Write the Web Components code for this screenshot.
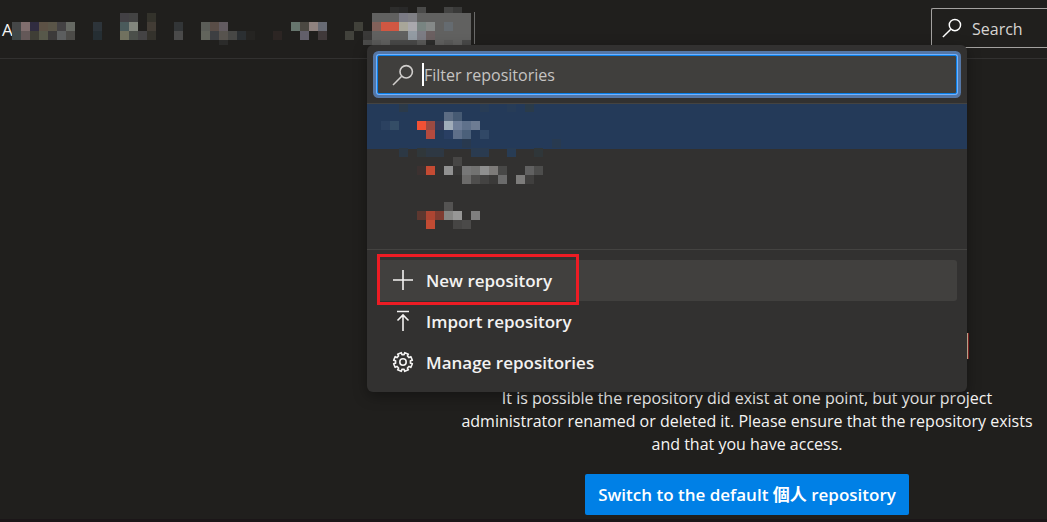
<!DOCTYPE html>
<html lang="en">
<head>
<meta charset="utf-8">
<title>Repositories</title>
<style>
html { background: #201f1d; }
body { margin: 0; color: #f5f4f3; font: 17px/23px "Open Sans", "Noto Sans CJK TC", sans-serif; }
</style>
</head>
<body>
<repo-page></repo-page>

<template id="page-tpl">
<style>
:host { display: block; position: relative; min-height: 100vh; box-sizing: border-box; border-bottom: 3px solid #1b1618; }
</style>
<page-header></page-header>
<missing-repo>
  It is possible the repository did exist at one point, but your project administrator renamed or deleted it. Please ensure that the repository exists and that you have access.
  <span slot="action">Switch to the default 個人 repository</span>
</missing-repo>
<repo-menu></repo-menu>
</template>

<template id="header-tpl">
<style>
:host { display: flex; align-items: flex-start; justify-content: space-between; height: 58px; border-bottom: 1px solid #323130; overflow: hidden; }
nav { display: flex; height: 38px; margin-top: 7px; overflow: hidden; }
nav a { width: 12px; padding: 11px 0 0 2px; box-sizing: border-box; color: inherit; text-decoration: none; }
.edge { width: 1px; height: 32px; margin: 5px 0 0 3px; background: #6a6a69; }
label { display: flex; align-items: center; gap: 10px; width: 116px; height: 40px; margin-top: 8px; padding-left: 10px; box-sizing: border-box; border: 1px solid #a3a19f; border-right: 0; border-radius: 2px 0 0 2px; }
input { flex: 1; min-width: 0; padding: 2px 0 0; border: 0; outline: 0; background: none; font: inherit; font-size: 16px; color: inherit; }
input::placeholder { color: #d6d4d2; opacity: 1; }
ui-icon { --size: 20px; color: #fff; }
</style>
<nav aria-label="Breadcrumb"><a href="#">A</a><pixel-mosaic cols="51" rows="5" trim="3" data-cells="
0: 42 2d2d2c 43 292929 45 4a4a49 48 434342 49 393938
1: 12 424044 13 434343 15 33322b 40 616160 41 616160 42 616160 43 7b7b85 44 7f7f84 45 616160 46 616160 47 616160 48 616160 49 616160 50 616160
2: 0 454748 1 806e6e 2 302c40 3 5c5145 4 5a5548 5 444244 6 666963 9 2d343a 12 4a5a5b 13 82867d 15 423c35 18 323537 21 5b5d58 22 594d47 23 625b60 31 67766e 32 4b4842 33 8f827f 34 676a73 38 41413a 40 82615a 41 d15742 42 d15742 43 a8a699 44 a9a8ad 45 788481 46 858988 47 616160 48 656b70 49 616160 50 616160
3: 0 404848 1 645858 2 3f3e36 3 57584a 4 3c3a3a 5 5c5e5f 6 4c4b48 9 252e33 12 71715f 13 4b4f4a 14 444344 15 34322c 18 4a4a4a 21 62645c 22 3d3f42 23 57534e 24 474745 25 2b2f32 26 252422 29 2c2523 32 625f6a 34 40393a 37 42423c 39 3a3938 40 616160 41 616160 42 616160 43 616160 44 939ba3 45 7c7c84 46 6b6061 47 616160 48 616160 49 616160 50 616160
4: 23 2b2b2a 39 4c4c4b 40 5a5a59 41 616160 42 4a4a49 43 4a4a49 44 4a4a49 45 5a5a59 46 2d2d2c 47 616160 48 5a5a59 49 616160 50 4a4a49"></pixel-mosaic><span class="edge"></span></nav>
<label><ui-icon name="search"></ui-icon><input type="text" placeholder="Search" aria-label="Search"></label>
</template>

<template id="missing-tpl">
<style>
:host { display: block; width: 600px; margin-left: auto; padding-top: 274px; text-align: center; }
.title { width: 520px; height: 26px; border-right: 1px solid #d9c2a4; box-shadow: 1px 0 #8e2525; }
p { margin: 28px 7px 18px; font-size: 16px; }
button { height: 41px; padding: 0 13px; border: 0; border-radius: 2px; background: #0080e6; color: #fff; font: inherit; font-weight: 600; }
</style>
<div class="title"></div>
<p><slot></slot></p>
<button type="button"><slot name="action"></slot></button>
</template>

<template id="menu-tpl">
<style>
:host { display: block; position: absolute; top: 45px; right: 80px; width: 600px; background: #323130; border-radius: 6px; box-shadow: 0 4px 14px rgba(0,0,0,.35); }
.filter { display: flex; align-items: center; height: 39px; margin: 10px 10px 9px; padding-left: 14px; box-sizing: border-box; border: 1px solid #0a80e8; border-radius: 2px; background: #403f3d; box-shadow: 0 0 0 1px #72b2ff, 0 0 0 4px #5577a6; }
.filter ui-icon { color: #d0cecc; }
.caret { width: 2px; height: 23px; margin-left: 8px; background: #fff; }
input { flex: 1; min-width: 0; padding: 2px 0 0; border: 0; outline: 0; background: none; font: inherit; font-size: 16px; color: inherit; }
input::placeholder { color: #c6c4c2; opacity: 1; }
.list { position: relative; border: solid #444341; border-width: 1px 0; padding-bottom: 10px; }
ul { margin: 0; padding: 0; list-style: none; }
li { height: 45px; }
li.selected { background: #243a59; }
.list pixel-mosaic { position: absolute; top: 0; left: 14px; }
.actions { padding: 10px 10px 9px; }
</style>
<label class="filter"><ui-icon name="search"></ui-icon><span class="caret"></span><input type="text" placeholder="Filter repositories" aria-label="Filter repositories"></label>
<div class="list">
  <ul><li class="selected"></li><li></li><li></li></ul>
  <pixel-mosaic cols="20" rows="14" trim="1" data-cells="
0: 2 2b3a4a 11 283c55 14 273c57 16 2a3b4a
1: 7 5c6c83 8 465a73
2: 0 2b4160 1 344d66 4 f15135 5 9c4a42 6 363b59 7 a0acb9 8 6f7f99 9 5f718b 10 6d7c93
3: 5 b44a3e 7 293f63 8 5e6f89 9 4b607a 11 314866
4: 9 28394f 19 283a50
5: 2 2c3844 4 30373a 5 2e3843 6 2e3843 10 2a3b50 11 2a3b50 14 283c54 17 2f3639
6: 8 474645
7: 4 3c3130 5 c54b33 7 919191 8 373635 9 777777 10 727271 11 8f8f8f 12 7d7b79 13 484847 16 616161 17 4d4d4c
8: 9 6c6b6a 10 4f4e4d 11 444342 12 3b3a39 13 6b6b6b 15 7d7c7b 16 403f3e
11: 7 545352
12: 4 5d372f 5 ad4532 6 7f3c31 7 868684 8 979796 10 7f7f7f
13: 5 c14b33 8 464544 9 4b4a49"></pixel-mosaic>
</div>
<div class="actions">
  <menu-action icon="plus" active>New repository</menu-action>
  <menu-action icon="import">Import repository</menu-action>
  <menu-action icon="gear">Manage repositories</menu-action>
</div>
</template>

<template id="action-tpl">
<style>
:host { display: block; position: relative; }
button { display: flex; align-items: center; gap: 12px; width: 100%; height: 41px; padding: 0 15px; border: 0; border-radius: 3px; background: none; color: #f3f2f1; font: inherit; font-weight: 600; text-align: left; }
ui-icon { margin-bottom: 2px; }
:host([active]) button { background: #41403e; }
:host([active])::after { content: ""; position: absolute; top: -6px; left: 0; width: 202px; height: 51px; box-sizing: border-box; border: 3px solid #ed1c24; }
</style>
<button type="button"><ui-icon></ui-icon><span><slot></slot></span></button>
</template>

<script>
const markup = id => document.getElementById(id).content.cloneNode(true);

class TemplateElement extends HTMLElement {
  constructor() {
    super();
    this.attachShadow({ mode: "open" }).append(markup(this.constructor.template));
  }
}

const ICONS = {
  search: '<circle cx="14.2" cy="7.8" r="6.2"/><path d="M9.700 12.300 1 21"/>',
  plus: '<path d="M11 1v20M1 11h20"/>',
  import: '<path d="M5 1.500h12M11 21V5M5.500 10.500 11 5l5.500 5.500"/>',
  gear: ''
};

/* Gear outline: eight broad teeth separated by narrow notches. */
(() => {
  const pt = (r, a) => (11 + r * Math.cos(a)).toFixed(2) + " " + (11 + r * Math.sin(a)).toFixed(2);
  let d = "";
  for (let i = 0; i < 8; i++) {
    const a = i * Math.PI / 4 + Math.PI / 8;
    d += (i ? "L" : "M") + pt(7.5, a - .24) + "L" + pt(9.5, a - .21) + "L" + pt(9.5, a + .21) + "L" + pt(7.5, a + .24);
  }
  ICONS.gear = '<path stroke-linejoin="round" d="' + d + 'Z"/><circle cx="11" cy="11" r="3.2"/>';
})();

class UiIcon extends HTMLElement {
  static observedAttributes = ["name"];
  connectedCallback() { this.draw(); }
  attributeChangedCallback() { this.draw(); }
  draw() {
    const root = this.shadowRoot || this.attachShadow({ mode: "open" });
    root.innerHTML = '<style>:host{display:block;flex:none;width:var(--size,22px);height:var(--size,22px)}svg{display:block;width:100%;height:100%}</style>' +
      '<svg viewBox="0 0 22 22" fill="none" stroke="currentColor" stroke-width="1.6" aria-hidden="true">' +
      (ICONS[this.getAttribute("name")] || "") + '</svg>';
  }
}

/* Redacted text: 9px squares listed by row as "row: column colour ...", trimmed at the top. */
class PixelMosaic extends HTMLElement {
  connectedCallback() {
    const cell = 9;
    const w = this.getAttribute("cols") * cell;
    const trim = +this.getAttribute("trim");
    const h = this.getAttribute("rows") * cell - trim;
    let rects = "";
    for (const line of this.dataset.cells.trim().split("\n")) {
      const [row, rest] = line.split(":");
      for (const m of rest.matchAll(/(\d+) ([0-9a-f]{6})/g))
        rects += `<rect x="${m[1] * cell}" y="${row * cell}" width="${cell}" height="${cell}" fill="#${m[2]}"/>`;
    }
    const root = this.shadowRoot || this.attachShadow({ mode: "open" });
    root.innerHTML = `<style>:host{display:block;flex:none}svg{display:block}</style>
      <svg width="${w}" height="${h}" viewBox="0 ${trim} ${w} ${h}" shape-rendering="crispEdges" aria-hidden="true">${rects}</svg>`;
  }
}

class MenuAction extends TemplateElement {
  static template = "action-tpl";
  connectedCallback() {
    this.shadowRoot.querySelector("ui-icon").setAttribute("name", this.getAttribute("icon"));
  }
}
class PageHeader extends TemplateElement { static template = "header-tpl"; }
class MissingRepo extends TemplateElement { static template = "missing-tpl"; }
class RepoMenu extends TemplateElement { static template = "menu-tpl"; }
class RepoPage extends TemplateElement { static template = "page-tpl"; }

customElements.define("ui-icon", UiIcon);
customElements.define("pixel-mosaic", PixelMosaic);
customElements.define("menu-action", MenuAction);
customElements.define("page-header", PageHeader);
customElements.define("missing-repo", MissingRepo);
customElements.define("repo-menu", RepoMenu);
customElements.define("repo-page", RepoPage);
</script>
</body>
</html>
